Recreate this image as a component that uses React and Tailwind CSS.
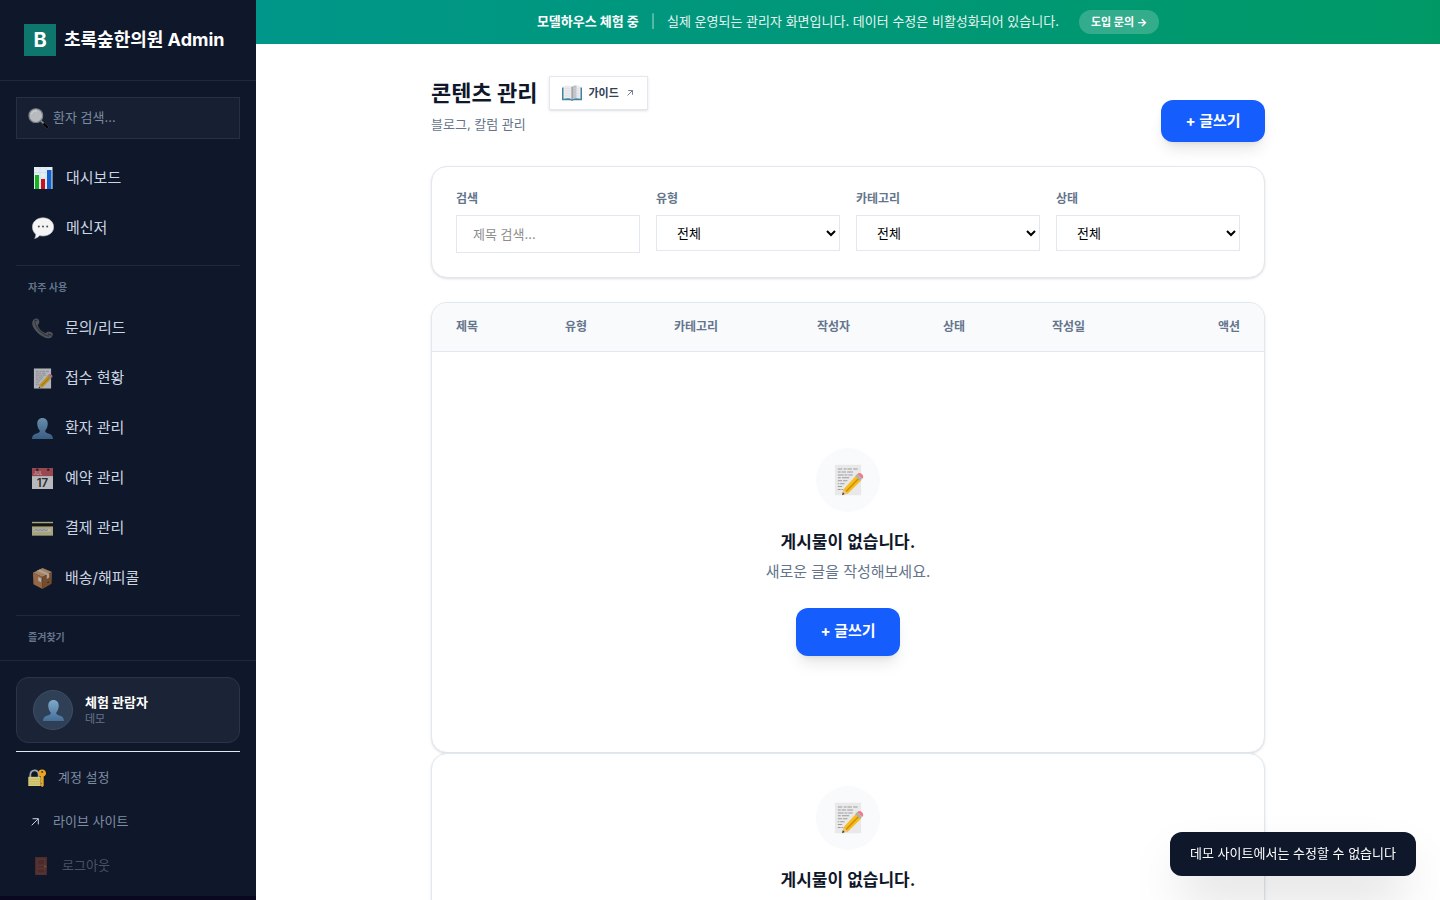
import React from 'react';

const quickMenus = [
  { label: '문의/리드', icon: PhoneIcon },
  { label: '접수 현황', icon: MemoIcon },
  { label: '환자 관리', icon: PersonIcon },
  { label: '예약 관리', icon: CalendarIcon },
  { label: '결제 관리', icon: CardIcon },
  { label: '배송/해피콜', icon: BoxIcon },
];

const filters = [
  { id: 'type', label: '유형' },
  { id: 'category', label: '카테고리' },
  { id: 'status', label: '상태' },
];

const columns = [
  { label: '제목', width: 'w-[109px]' },
  { label: '유형', width: 'w-[109px]' },
  { label: '카테고리', width: 'w-[143px]' },
  { label: '작성자', width: 'w-[126px]' },
  { label: '상태', width: 'w-[109px]' },
  { label: '작성일', width: 'w-[126px]' },
  { label: '액션', width: 'w-[110px]' },
];

function SearchIcon({ className }) {
  return (
    <svg viewBox="0 0 22 22" className={className} aria-hidden="true">
      <path d="M12.500 14.200l1.800-1.800 7.200 7c.8 1-1.200 2.800-2.200 2z" fill="#050608" stroke="#3f4247" strokeWidth=".6" />
      <path d="M12.800 12.800l3.500 3.300" stroke="#8d9095" strokeWidth="1.600" />
      <circle cx="8.200" cy="8" r="7.200" fill="#b7babf" stroke="#7d8187" strokeWidth="1.200" />
      <path d="M3.500 6.500a5 5 0 0 1 6-3.200" stroke="#d4d6da" strokeWidth="1" fill="none" />
    </svg>
  );
}

function ChartIcon({ className }) {
  return (
    <svg viewBox="0 0 22 22" className={className} aria-hidden="true">
      <path d="M2 0h18.500v22H2z" fill="#e3edf5" />
      <path d="M2 5.500h18M2 11h18M2 16.500h18M8 0v22M14 0v22" stroke="#c5d5e2" strokeWidth=".5" />
      <path d="M3 8h4v14H3z" fill="#12b31c" />
      <path d="M9 12h4v10H9z" fill="#c8101e" />
      <path d="M15 3h4.500v19H15z" fill="#1260c9" />
    </svg>
  );
}

function ChatIcon({ className }) {
  return (
    <svg viewBox="0 0 22 22" className={className} aria-hidden="true">
      <path
        d="M11 .8c6 0 10.700 4 10.700 9.200S17 19 11 19c-1.200 0-2.300-.1-3.300-.4C6.300 20 4.500 21.300 2.600 21.400c.9-1.200 1.300-2.800 1.100-4.200C1.700 15.500.4 13 .4 10 .4 4.800 5 .8 11 .8z"
        fill="#f4f4f4"
        stroke="#bfc2c6"
        strokeWidth=".6"
      />
      <g fill="#4b4e54">
        <circle cx="6.800" cy="9.600" r="1" />
        <circle cx="11" cy="9.600" r="1" />
        <circle cx="15.200" cy="9.600" r="1" />
      </g>
    </svg>
  );
}

function PhoneIcon({ className }) {
  return (
    <svg viewBox="0 0 22 22" className={className} aria-hidden="true">
      <path
        d="M.6 3.500C1.500 1 4.500 0 6.200 1c1.700 1 1.900 4.200.6 5.500-.8.7-1 1-.6 2 1.400 3.200 4.200 6 7.400 7.300 1 .4 1.200-.3 1.900-.9 1.300-1.100 5.400-.4 6.200 1.300.6 1.600-.5 3.900-2.500 4.800C12.500 23.200-2.200 11 .6 3.500z"
        fill="#66686b"
      />
      <path d="M3 4c.4 6 7.500 13.800 15 15" stroke="#434548" strokeWidth="1.300" fill="none" />
      <path d="M2.500 3.300l3-1.200M16.500 16.400l4 1.800" stroke="#34363a" strokeWidth="1.200" />
    </svg>
  );
}

function MemoIcon({ className }) {
  return (
    <svg viewBox="0 0 22 22" className={className} aria-hidden="true">
      <path d="M2 .5h18v21H2z" fill="#e9e9e9" />
      <path
        d="M4 3.500h3m1 0h2m.6 0h3m1 0h3M4 5.500h2m.6 0h3m.8 0h4M4 7.500h4m.6 0h2m.6 0h3M4 9.500h2m.8 0h5M4 11.500h3m.6 0h3M4 13.500h1m.6 0h3M4 15.500h3M4 17.500h2m.5 0h1"
        stroke="#9b9b9b"
        strokeWidth=".7"
      />
      <path d="M7.800 17.500L16.500 8l3.600 3.300-9.200 9-3.900 1z" fill="#f6bd1d" />
      <path d="M9.500 19l9-9.200" stroke="#d18c0c" strokeWidth="1" />
      <path d="M7.800 17.300l3.100 2.800-3.900 1.200z" fill="#e8c58c" />
      <path d="M7.500 19.500l1.100 1.200-1.700.7z" fill="#333" />
      <path d="M16 8.300l1.100-1.200 3.500 3.200-1.200 1.300z" fill="#a7b3b5" />
      <path d="M17.200 7c1-1.200 2.400-1 3.500 0s1 2.300 0 3.300z" fill="#ec8088" />
    </svg>
  );
}

function PersonIcon({ className }) {
  return (
    <svg viewBox="0 0 22 22" className={className} aria-hidden="true">
      <defs>
        <linearGradient id="person" x1="0" y1="0" x2="0" y2="1">
          <stop offset="0" stopColor="#87b5d7" />
          <stop offset="1" stopColor="#48749f" />
        </linearGradient>
      </defs>
      <path
        d="M11 0c3.600 0 5.600 2.600 5.500 6.200-.1 3-1.200 5.200-2.500 6.600-.4 1.500.2 2.300 1.700 2.900C19 17 21.900 17.500 22 22H0c.1-4.500 3-5 6.300-6.300 1.500-.6 2.100-1.400 1.700-2.900-1.300-1.400-2.400-3.600-2.500-6.600C5.400 2.600 7.400 0 11 0z"
        fill="url(#person)"
      />
    </svg>
  );
}

function CalendarIcon({ className }) {
  return (
    <svg viewBox="0 0 22 22" className={className} aria-hidden="true">
      <path d="M0 0h22v22H0z" fill="#efefef" />
      <path d="M0 0h22v8.500H0z" fill="#c9575c" />
      <circle cx="5.500" cy="1.800" r="1.400" fill="#3c2831" />
      <circle cx="17" cy="1.800" r="1.400" fill="#3c2831" />
      <text x="1.500" y="7.500" fontSize="5" fontWeight="600" fontFamily="Inter, sans-serif" fill="#f3cfd0">
        JUL
      </text>
      <text x="11" y="19.500" fontSize="12" fontWeight="600" textAnchor="middle" fontFamily="Inter, sans-serif" fill="#333">
        17
      </text>
    </svg>
  );
}

function CardIcon({ className }) {
  return (
    <svg viewBox="0 0 22 22" className={className} aria-hidden="true">
      <path d="M0 4h22v14.500H0z" fill="#dcd596" />
      <path d="M0 5.500h22v3.300H0z" fill="#14140f" />
      <path d="M1.500 11.300h18v3h-18z" fill="#ebeae0" />
      <path d="M2.500 13l2-.8 2 .8 2-.7 2 .6 2-.6 2 .6 2-.5" stroke="#7789b8" strokeWidth=".8" fill="none" />
    </svg>
  );
}

function BoxIcon({ className }) {
  return (
    <svg viewBox="0 0 22 22" className={className} aria-hidden="true">
      <path d="M11 0l10 4.300L11 9.500 1 5z" fill="#d9a574" />
      <path d="M1 5l10 4.500V22L1.500 17z" fill="#c18450" />
      <path d="M21 4.300L11 9.500V22l9.500-5.500z" fill="#95602f" />
      <path d="M5 3l10.500 4.300v4.200l2.500-1.600V6L8 1.500z" fill="#e2cfb9" />
      <path d="M6.500 9.500l3 1.300v4l-3-1.500z" fill="#e9e2da" />
      <path d="M16 15.500l2-1" stroke="#4f3218" strokeWidth="1.200" />
    </svg>
  );
}

function LockIcon({ className }) {
  return (
    <svg viewBox="0 0 18 18" className={className} aria-hidden="true">
      <path d="M2.300 8.500V6.200C2.300 3 4 1.300 6.500 1.300s4.200 1.700 4.200 4.900v2.300" fill="none" stroke="#9aa3ae" strokeWidth="1.800" />
      <path d="M.3 7.800h12.400v9.200H.3z" fill="#d6cb79" />
      <path d="M.3 10.200h12.400M.3 12.600h12.400M.3 15h12.400" stroke="#b8ab5a" strokeWidth=".6" />
      <path
        d="M14 .5c2.400 0 4 1.500 4 3.700 0 1.700-1 2.800-2.300 3.300v9.200l-1.300 1.200-1.500-1v-1.500l.7-.8-.7-.8V7.500C11.300 7 10.200 6 10.200 4.200 10.200 2 11.800.5 14 .5z"
        fill="#eda51f"
      />
      <circle cx="14.200" cy="3" r="1.100" fill="#5a4218" />
    </svg>
  );
}

function DoorIcon({ className }) {
  return (
    <svg viewBox="0 0 18 18" className={className} aria-hidden="true">
      <path d="M3 0h12v18H3z" fill="#88422b" />
      <path d="M4.500 1.500h9v16h-9z" fill="#a4523a" />
      <path d="M6 3h6v4.500H6zM6 9h6v1.500H6zM6 12.500h6v3H6z" fill="#82402c" />
      <circle cx="13.300" cy="9.500" r=".9" fill="#d9a441" />
    </svg>
  );
}

function BookIcon({ className }) {
  return (
    <svg viewBox="0 0 20 16" className={className} aria-hidden="true">
      <path d="M0 2.500h20v12.800h-8.500L10 16l-1.500-.7H0z" fill="#3f83a3" />
      <path d="M1.500 1C5 .1 8.300.2 10 1.700 11.700.2 15 .1 18.500 1v12.700c-3.400-.8-6.800-.7-8.500.9-1.700-1.600-5.100-1.700-8.500-.9z" fill="#ececef" />
      <path d="M10 1.700c1-1 2.800-1.300 4.500-1.200v12.700c-1.800-.1-3.500.3-4.500 1.400z" fill="#c2c2c9" />
      <path d="M10 1.700v13" stroke="#77777f" strokeWidth=".8" />
      <path d="M3 3.500c2-.4 4-.3 5.500.4M3 6c2-.4 4-.3 5.500.4M3 8.500c2-.4 4-.3 5.500.4M3 11c2-.4 4-.3 5.500.4M12 3.900c1.500-.6 3.300-.7 5-.4M12 6.400c1.500-.6 3.300-.7 5-.4M12 8.900c1.500-.6 3.300-.7 5-.4M12 11.400c1.500-.6 3.300-.7 5-.4" stroke="#d0d0d6" strokeWidth=".5" fill="none" />
    </svg>
  );
}

function ArrowIcon({ className }) {
  return (
    <svg viewBox="0 0 8 8" fill="none" stroke="currentColor" className={className} aria-hidden="true">
      <path d="M.7 7.300L7.200.8M1.600.7h5.700v5.700" />
    </svg>
  );
}

const SectionLabel = ({ children }) => (
  <div className="mt-[15px] border-t border-[#1e293b] px-3 pt-[14px] pb-3 text-[10px] leading-[14px] font-bold text-[#64748b]">
    {children}
  </div>
);

const Sidebar = () => (
  <aside className="flex h-full w-64 shrink-0 flex-col border-b-4 border-[#0a0820] bg-[#0f172a] text-[#cbd5e1]">
    <div className="flex h-[81px] shrink-0 items-center gap-2 border-b border-[#1e293b] px-6">
      <span className="flex size-8 items-center justify-center bg-[#0f766e] text-xl font-bold text-white">B</span>
      <span className="text-lg font-bold whitespace-nowrap text-white">초록숲한의원 Admin</span>
    </div>

    <nav className="flex min-h-0 flex-1 flex-col overflow-hidden px-4 pt-4">
      <button type="button" className="flex h-[42px] shrink-0 items-center gap-1 border border-[#243044] bg-[#162032] px-[11px] text-[13px] text-[#7c8aa0]">
        <SearchIcon className="size-[21px] shrink-0" />
        환자 검색...
      </button>
      <div className="mt-[17px] flex flex-col gap-[6px] text-[15px]">
        <a href="#dashboard" className="flex h-11 items-center gap-3 px-4">
          <ChartIcon className="size-[22px]" />
          대시보드
        </a>
        <a href="#messenger" className="flex h-11 items-center gap-3 px-4">
          <ChatIcon className="size-[22px]" />
          메신저
        </a>
      </div>
      <SectionLabel>자주 사용</SectionLabel>
      <div className="flex flex-col gap-[6px] text-[15px]">
        {quickMenus.map(({ label, icon: Icon }) => (
          <a key={label} href="#menu" className="flex h-11 shrink-0 items-center gap-3 px-4">
            <Icon className="size-[21px] opacity-75" />
            {label}
          </a>
        ))}
      </div>
      <SectionLabel>즐겨찾기</SectionLabel>
    </nav>

    <div className="shrink-0 border-t border-[#1e293b] px-4 pt-4 pb-2">
      <div className="flex h-[66px] items-center gap-3 rounded-xl border border-[#2c3548] bg-[#1b2436] px-4">
        <span className="flex size-10 items-center justify-center rounded-full border border-[#3d4d63] bg-[#2f3f56]">
          <PersonIcon className="size-[21px] opacity-90" />
        </span>
        <div>
          <div className="text-[13px] leading-[18px] font-bold text-white">체험 관람자</div>
          <div className="text-[11px] leading-4 text-[#64748b]">데모</div>
        </div>
      </div>
      <div className="mt-2 border-t border-[#e2e8f0] pt-1 text-[13px] text-[#7f8da3]">
        <a href="#account" className="flex h-11 items-center gap-3 px-3">
          <LockIcon className="size-[18px]" />
          계정 설정
        </a>
        <a href="#live" className="flex h-11 items-center gap-3 px-3">
          <span className="flex w-[13px] justify-center">
            <ArrowIcon className="size-2 text-[#cbd5e1]" />
          </span>
          라이브 사이트
        </a>
        <button type="button" disabled className="flex h-11 items-center gap-3 px-4 opacity-50">
          <DoorIcon className="size-[18px]" />
          로그아웃
        </button>
      </div>
    </div>
  </aside>
);

const WriteButton = ({ className }) => (
  <button
    type="button"
    className={`w-[104px] rounded-xl bg-[#155dfc] text-[15px] font-bold text-white shadow-lg shadow-black/10 ${className}`}
  >
    + 글쓰기
  </button>
);

const EmptyState = () => (
  <div className="flex flex-col items-center">
    <div className="flex size-16 items-center justify-center rounded-full bg-[#f8fafc]">
      <MemoIcon className="size-[32px]" />
    </div>
    <h3 className="mt-4 text-[17px] leading-7 font-bold text-[#0f172a]">게시물이 없습니다.</h3>
    <p className="mt-1 text-[15px] leading-6 text-[#64748b]">새로운 글을 작성해보세요.</p>
    <WriteButton className="mt-6 h-12" />
  </div>
);

const App = () => {
  return (
    <div className="flex h-screen overflow-hidden bg-white font-[Inter,'Noto_Sans_CJK_KR',sans-serif]">
      <Sidebar />

      <div className="flex min-w-0 flex-1 flex-col">
        <div className="flex h-11 shrink-0 items-center justify-center bg-linear-to-r from-[#009689] to-[#009966] text-[13px] text-white">
          <span className="font-bold">모델하우스 체험 중</span>
          <span className="mx-3 opacity-60">|</span>
          <span className="opacity-90">실제 운영되는 관리자 화면입니다. 데이터 수정은 비활성화되어 있습니다.</span>
          <a href="#contact" className="ml-5 flex h-6 items-center rounded-full bg-white/20 px-3 text-[11px] font-bold">
            도입 문의 →
          </a>
        </div>

        <main className="min-h-0 flex-1 overflow-hidden px-8 pt-8">
          <div className="mx-auto max-w-[834px]">
            <header className="mb-6 flex items-end justify-between">
              <div className="pb-2">
                <div className="flex items-center gap-3">
                  <h1 className="text-[22px] leading-8 font-bold text-[#0f172a]">콘텐츠 관리</h1>
                  <a
                    href="#guide"
                    className="flex h-[34px] items-center gap-[6px] border border-[#e2e8f0] bg-white px-3 text-[11px] font-bold text-[#334155] shadow-sm"
                  >
                    <BookIcon className="h-4 w-5" />
                    가이드
                    <ArrowIcon className="mx-[2px] size-[6px] text-[#475569]" />
                  </a>
                </div>
                <p className="mt-1 text-[13px] leading-5 text-[#64748b]">블로그, 칼럼 관리</p>
              </div>
              <WriteButton className="h-[42px]" />
            </header>

            <section className="mb-6 grid grid-cols-4 items-start gap-4 rounded-2xl border border-[#e2e8f0] bg-white p-6 shadow-sm">
              <div>
                <label htmlFor="search" className="mb-2 block text-xs leading-4 font-bold text-[#64748b]">
                  검색
                </label>
                <input
                  id="search"
                  type="text"
                  placeholder="제목 검색..."
                  className="h-[38px] w-full border border-[#e2e8f0] px-4 text-[13px] placeholder:text-[#8e8e8e]"
                />
              </div>
              {filters.map((filter) => (
                <div key={filter.id}>
                  <label htmlFor={filter.id} className="mb-2 block text-xs leading-4 font-bold text-[#64748b]">
                    {filter.label}
                  </label>
                  <select id={filter.id} className="h-9 w-full border border-[#e2e8f0] bg-white px-4 text-[13px] text-black">
                    <option>전체</option>
                  </select>
                </div>
              ))}
            </section>

            <section className="overflow-hidden rounded-2xl border border-[#e2e8f0] bg-white shadow-sm">
              <table className="w-full table-fixed border-collapse">
                <thead>
                  <tr className="h-12 border-b border-[#e2e8f0] bg-[#f8fafc]">
                    {columns.map((col) => (
                      <th
                        key={col.label}
                        scope="col"
                        className={`${col.width} px-6 text-left text-xs font-bold text-[#64748b] last:text-right`}
                      >
                        {col.label}
                      </th>
                    ))}
                  </tr>
                </thead>
                <tbody>
                  <tr>
                    <td colSpan={7} className="py-24">
                      <EmptyState />
                    </td>
                  </tr>
                </tbody>
              </table>
            </section>

            <section className="rounded-2xl border border-[#e2e8f0] bg-white py-8 shadow-sm">
              <EmptyState />
            </section>
          </div>
        </main>
      </div>

      <div
        role="status"
        className="fixed right-6 bottom-6 flex h-11 items-center rounded-xl bg-[#0f172a] px-5 text-[13px] text-white shadow-2xl"
      >
        데모 사이트에서는 수정할 수 없습니다
      </div>
    </div>
  );
};

export default App;
